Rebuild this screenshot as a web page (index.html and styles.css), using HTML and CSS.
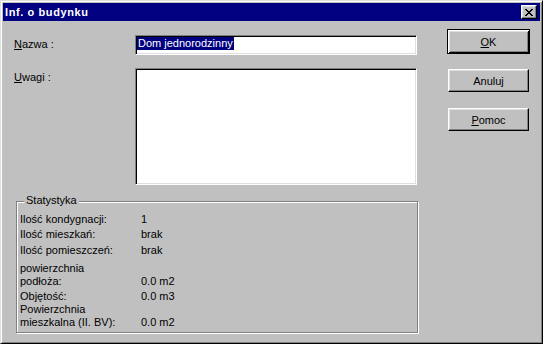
FILE: index.html
```html
<!DOCTYPE html>
<html lang="pl">
<head>
  <meta charset="UTF-8" />
  <title>Inf. o budynku</title>
  <link rel="stylesheet" href="styles.css">
</head>
<body>

  <!-- Dialog window -->
  <div class="window">
    <div class="titlebar">
      <span class="title">Inf. o budynku</span>
      <button class="close" title="Zamknij">
        <svg width="8" height="7" viewBox="0 0 8 7">
          <path d="M0 0h2v1h-2zM6 0h2v1h-2zM1 1h2v1h-2zM5 1h2v1h-2zM2 2h4v1h-4zM3 3h2v1h-2zM2 4h4v1h-4zM1 5h2v1h-2zM5 5h2v1h-2zM0 6h2v1h-2zM6 6h2v1h-2z" fill="#000"/>
        </svg>
      </button>
    </div>

    <div class="client">
      <div class="left">
        <div class="field">
          <label class="label"><u>N</u>azwa :</label>
          <div class="edit"><span class="selected">Dom jednorodzinny</span></div>
        </div>
        <div class="field memo-field">
          <label class="label"><u>U</u>wagi :</label>
          <div class="edit memo"></div>
        </div>

        <div class="group">
          <span class="legend">Statystyka</span>
          <div class="stat">
            <span>Ilość kondygnacji:</span><span>1</span>
          </div>
          <div class="stat">
            <span>Ilość mieszkań:</span><span>brak</span>
          </div>
          <div class="stat gap3">
            <span>Ilość pomieszczeń:</span><span>brak</span>
          </div>
          <div class="stat gap5">
            <span>powierzchnia<br>podłoża:</span><span>0.0 m2</span>
          </div>
          <div class="stat">
            <span>Objętość:</span><span>0.0 m3</span>
          </div>
          <div class="stat gap0">
            <span>Powierzchnia<br>mieszkalna (II. BV):</span><span>0.0 m2</span>
          </div>
        </div>
      </div>

      <div class="buttons">
        <button class="btn default"><u>O</u>K</button>
        <button class="btn">Anuluj</button>
        <button class="btn"><u>P</u>omoc</button>
      </div>
    </div>
  </div>

</body>
</html>
```

FILE: styles.css
```css
:root {
  --face: #c0c0c0;
  --light: #dfdfdf;
  --shadow: #808080;
  --navy: #000080;
}

body {
  margin: 0;
  padding: 0;
  background: var(--face);
  font-family: 'Liberation Sans', Arial, sans-serif;
  font-size: 11px;
  color: #000;
}

.window {
  box-sizing: border-box;
  width: 543px;
  height: 344px;
  padding: 2px;
  background: var(--face);
  border: 1px solid;
  border-color: var(--light) #000 #000 var(--light);
  box-shadow: inset 1px 1px #fff, inset -1px -1px var(--shadow);
  display: flex;
  flex-direction: column;
}

.titlebar {
  height: 18px;
  background: var(--navy);
  display: flex;
  align-items: center;
  justify-content: space-between;
  padding: 0 3px 0 2px;
}

.title {
  color: #fff;
  font-weight: bold;
  letter-spacing: 0.6px;
  line-height: 18px;
}

.close {
  box-sizing: border-box;
  width: 16px;
  height: 14px;
  padding: 0;
  background: var(--face);
  border: 1px solid;
  border-color: #fff #000 #000 #fff;
  box-shadow: inset -1px -1px var(--shadow), inset 1px 1px var(--light);
  display: flex;
  align-items: center;
  justify-content: center;
}

.close svg {
  display: block;
  margin-left: -1px;
}

.client {
  flex: 1;
  display: flex;
  padding: 8px 0 0 11px;
}

.left {
  width: 403px;
  padding-top: 6px;
}

.field {
  display: flex;
}

.label {
  width: 121px;
  line-height: 19px;
}

.memo-field {
  margin-top: 13px;
}

.memo-field .label {
  line-height: 13px;
  padding-top: 3px;
}

.edit {
  box-sizing: border-box;
  width: 282px;
  height: 20px;
  padding: 1px 0 0 0;
  background: #fff;
  border: 1px solid;
  border-color: var(--shadow) #fff #fff var(--shadow);
  box-shadow: inset 1px 1px #000, inset -1px -1px var(--light);
  line-height: 13px;
}

.edit.memo {
  height: 117px;
}

.selected {
  display: inline-block;
  margin-left: 1px;
  padding: 0 1px;
  background: var(--navy);
  color: #fff;
}

.group {
  position: relative;
  box-sizing: border-box;
  width: 402px;
  height: 132px;
  margin: 16px 0 0 2px;
  padding: 11px 0 0 3px;
  border: 1px solid var(--shadow);
  box-shadow: inset 1px 1px #fff, 1px 1px #fff;
}

.legend {
  position: absolute;
  top: -8px;
  left: 7px;
  padding: 0 2px;
  background: var(--face);
  line-height: 13px;
}

.stat {
  display: grid;
  grid-template-columns: 121px 1fr;
  align-items: end;
  line-height: 13px;
  margin-top: 2px;
}

.stat:first-of-type {
  margin-top: 0;
}

.stat.gap3 {
  margin-top: 3px;
}

.stat.gap5 {
  margin-top: 5px;
}

.stat.gap0 {
  margin-top: 0;
}

.buttons {
  width: 83px;
  margin-left: 30px;
  display: flex;
  flex-direction: column;
  align-items: center;
  gap: 16px;
}

.btn {
  box-sizing: border-box;
  width: 81px;
  height: 23px;
  padding: 0;
  background: var(--face);
  font-family: inherit;
  font-size: 11px;
  color: #000;
  border: 1px solid;
  border-color: #fff #000 #000 #fff;
  box-shadow: inset -1px -1px var(--shadow), inset 1px 1px var(--light);
}

.btn.default {
  width: 83px;
  height: 25px;
  border: 1px solid #000;
  box-shadow: inset 1px 1px #fff, inset -1px -1px #000,
    inset 2px 2px var(--light), inset -2px -2px var(--shadow);
  margin-bottom: -1px;
}
```
